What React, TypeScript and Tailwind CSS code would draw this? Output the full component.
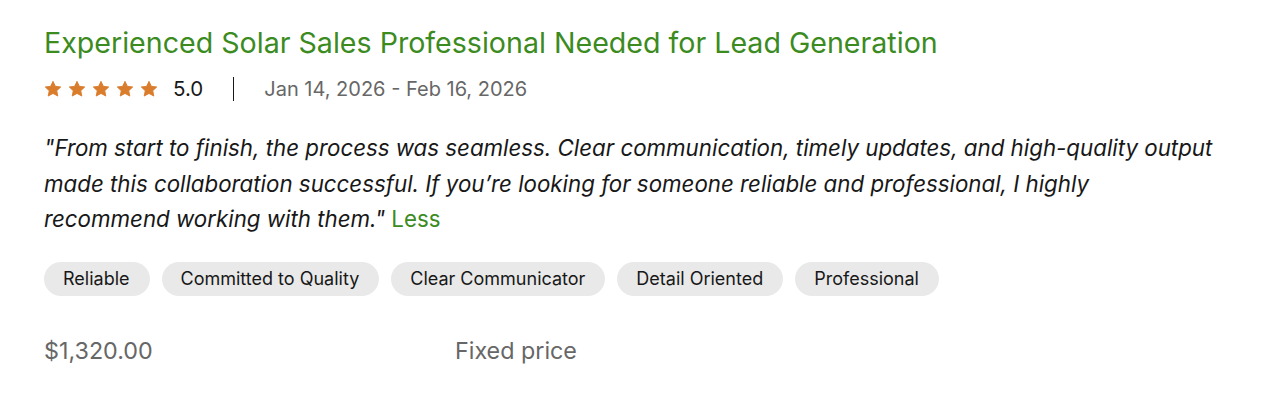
const tags = ['Reliable', 'Committed to Quality', 'Clear Communicator', 'Detail Oriented', 'Professional'];

const Star = () => (
  <svg viewBox="0 0 24 24" className="w-[18px] h-[18px] fill-[#d97c2c]" strokeLinejoin="round">
    <path
      d="M12 1.8l3.1 6.6 7.2.9-5.3 5 1.4 7.1L12 17.9l-6.4 3.5 1.4-7.1-5.3-5 7.2-.9z"
      stroke="#d97c2c"
      strokeWidth="1.2"
    />
  </svg>
);

const App = () => {
  return (
    <div className="min-h-screen bg-white font-['Inter',sans-serif] px-[44px] pt-[24px]">
      <h2 className="text-[28.6px] leading-[38px] text-[#3b8b1f]">
        Experienced Solar Sales Professional Needed for Lead Generation
      </h2>

      <div className="flex items-center mt-[14px] h-[26px]">
        <div className="flex gap-[6px]">
          {[0, 1, 2, 3, 4].map((i) => (
            <Star key={i} />
          ))}
        </div>
        <span className="ml-[15px] text-[20.5px] text-[#181818]">5.0</span>
        <span className="mx-[30px] w-px h-[24px] bg-[#181818]"></span>
        <span className="text-[20px] text-[#676767]">Jan 14, 2026 - Feb 16, 2026</span>
      </div>

      <p className="mt-[28px] text-[22.3px] leading-[35.5px] italic text-[#181818] max-w-[1172px]">
        "From start to finish, the process was seamless. Clear communication, timely updates, and high-quality output
        made this collaboration successful. If you’re looking for someone reliable and professional, I highly
        recommend working with them." <span className="not-italic text-[#3b8b1f]">Less</span>
      </p>

      <div className="flex flex-wrap gap-[12px] mt-[25px]">
        {tags.map((tag) => (
          <span
            key={tag}
            className="h-[34px] pl-[19px] pr-[20px] flex items-center rounded-full bg-[#e9e9e9] text-[18px] text-[#181818]"
          >
            {tag}
          </span>
        ))}
      </div>

      <div className="flex items-center mt-[40px] h-[32px] text-[23.3px] text-[#676767]">
        <span className="w-[411px]">$1,320.00</span>
        <span>Fixed price</span>
      </div>
    </div>
  );
};

export default App;
